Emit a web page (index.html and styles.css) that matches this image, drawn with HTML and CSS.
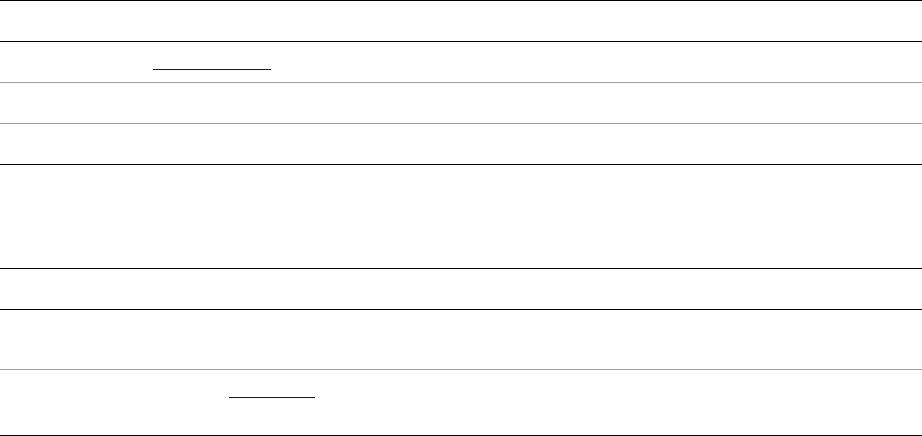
FILE: index.html
```html
<!DOCTYPE html>
<html>
<head>
<meta charset="utf-8">
<link rel="stylesheet" href="styles.css">
</head>
<body>
<div class="list">
  <div class="row dark h41"></div>
  <div class="row dark h41"><a class="link link-a" href="#"></a></div>
  <div class="row light h41"></div>
  <div class="row light h41"></div>
  <div class="row dark h104"></div>
  <div class="row dark h41"></div>
  <div class="row dark h60"></div>
  <div class="row light h66 last"><a class="link link-b" href="#"></a></div>
</div>
</body>
</html>
```
FILE: styles.css
```css
html, body {
  margin: 0;
  padding: 0;
  background: #ffffff;
  font-family: "Liberation Sans", Arial, sans-serif;
}
.list {
  display: flex;
  flex-direction: column;
  width: 922px;
}
.row {
  box-sizing: border-box;
  display: flex;
  align-items: flex-start;
}
.dark { border-top: 1px solid #000000; }
.light { border-top: 1px solid #a0a0a0; }
.last { border-bottom: 1px solid #000000; }
.h41 { height: 41px; }
.h60 { height: 60px; }
.h66 { height: 67px; }
.h104 { height: 104px; }
.link {
  display: block;
  height: 0;
  border-bottom: 1px solid #0000ff;
}
.link-a {
  width: 118px;
  margin: 27px 0 0 153px;
}
.link-b {
  width: 86px;
  margin: 27px 0 0 229px;
}
```
